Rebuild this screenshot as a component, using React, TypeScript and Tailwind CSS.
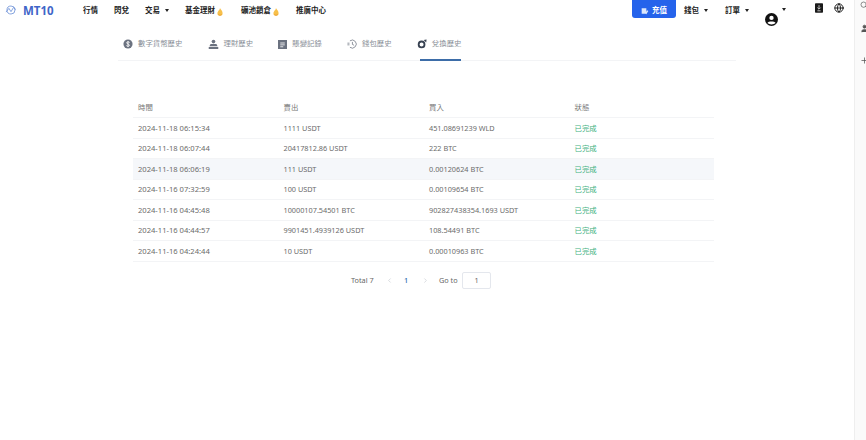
import { ChevronLeft, ChevronRight, Globe, Plus, Search, User } from 'lucide-react';

const font = "font-['Noto_Sans','Noto_Sans_CJK_TC',sans-serif]";

const rows = [
  ['2024-11-18 06:15:34', '1111 USDT', '451.08691239 WLD'],
  ['2024-11-18 06:07:44', '20417812.86 USDT', '222 BTC'],
  ['2024-11-18 06:06:19', '111 USDT', '0.00120624 BTC'],
  ['2024-11-16 07:32:59', '100 USDT', '0.00109654 BTC'],
  ['2024-11-16 04:45:48', '10000107.54501 BTC', '902827438354.1693 USDT'],
  ['2024-11-16 04:44:57', '9901451.4939126 USDT', '108.54491 BTC'],
  ['2024-11-16 04:24:44', '10 USDT', '0.00010963 BTC'],
];

const Caret = () => (
  <span className="ml-[5px] block h-0 w-0 border-x-[2.5px] border-t-[3px] border-x-transparent border-t-[#222]" />
);

const Flame = () => (
  <svg viewBox="0 0 10 12" className="ml-px mt-[2px] h-[8px] w-[8px]">
    <path d="M5 0c.4 2 3.8 3.6 3.8 7.200A3.800 3.800 0 0 1 5 11.600a3.800 3.800 0 0 1-3.800-4.400C1.400 5.600 2.400 5 2.800 3.600 3.600 4 4.400 2.400 5 0z" fill="#f7c04a" />
    <path d="M2.500 9c1.500 1.500 3.500 1.500 5 0v1.500l-2.500 1-2.500-1z" fill="#eb9f35" />
  </svg>
);

const NavItem = ({ label, caret, flame, className }: { label: string; caret?: boolean; flame?: boolean; className: string }) => (
  <div className={`flex h-[18px] items-center pt-[3px] text-[7.5px] font-bold text-[#222] ${className}`}>
    {label}
    {caret && <Caret />}
    {flame && <Flame />}
  </div>
);

const tabIcons = [
  <svg key="coin" viewBox="0 0 12 12" className="h-[10px] w-[10px]">
    <circle cx="6" cy="6" r="5.500" fill="#6b7280" />
    <path d="M8 4.200C7.500 3.300 4.500 3 4.300 4.500S8 6 7.800 7.600 4.500 8.800 4 7.800M6 2.500v7" stroke="#fff" strokeWidth="1" fill="none" />
  </svg>,
  <svg key="bag" viewBox="0 0 12 12" className="h-[11px] w-[11px]">
    <circle cx="6" cy="2.800" r="2" fill="#6b7280" />
    <path d="M2.800 5.400h6.400L10.500 8h-9zM.8 8.800h10.400V11H.8z" fill="#6b7280" />
  </svg>,
  <svg key="note" viewBox="0 0 12 12" className="h-[9px] w-[9px]">
    <path d="M0 0h12v12H0z" fill="#6b7280" />
    <path d="M3 4h6M3 6.500h6M3 9h4" stroke="#fff" strokeWidth="1.100" />
  </svg>,
  <svg key="wallet" viewBox="0 0 12 12" className="h-[10px] w-[10px]" fill="none" stroke="#6b7280" strokeWidth="0.9">
    <path d="M3.500 2.200A4.800 4.800 0 1 1 3.500 10" />
    <path d="M6.500 3.500v3l2 1M.5 5h2.500M.5 7h2.500" />
  </svg>,
  <svg key="swap" viewBox="0 0 12 12" className="h-[10px] w-[10px]">
    <circle cx="5.500" cy="6.500" r="3.500" fill="none" stroke="#374151" strokeWidth="2.200" />
    <path d="M8 1.200l3.500-.5-.5 3.500z" fill="#374151" />
  </svg>,
];

const tabs = ['數字貨幣歷史', '理財歷史', '賬變記錄', '錢包歷史', '兌換歷史'];

export default function App() {
  return (
    <div className={`flex h-[440px] w-[866px] overflow-hidden bg-white ${font}`}>
      <div className="w-[854px] shrink-0">
        <header className="flex h-[18px] items-start">
          <div className="flex h-[18px] w-[83px] items-center">
            <svg viewBox="0 0 14 12" className="ml-[5px] mt-[2px] h-[10px] w-[12px]" fill="none" stroke="#6f93d8" strokeWidth="1">
              <circle cx="7" cy="6" r="4.800" />
              <path d="M1 8.500 4.500 4 7 8l3-5 3 2.500" />
            </svg>
            <span className="ml-[6px] pt-[3px] text-[11.5px] font-bold leading-none text-[#3f66c8]">MT10</span>
          </div>
          <div className="flex h-[18px] flex-1 items-center">
            <NavItem label="行情" className="w-[31px]" />
            <NavItem label="閃兌" className="w-[31px]" />
            <NavItem label="交易" caret className="w-[40px]" />
            <NavItem label="基金理財" flame className="w-[56px]" />
            <NavItem label="礦池鎖倉" flame className="w-[55px]" />
            <NavItem label="推廣中心" className="w-[336px]" />
            <button className="flex h-[18px] w-[44px] items-center justify-center gap-[3px] rounded-b-[3px] bg-[#2563eb] pt-[3px] text-[7.5px] font-bold text-white">
              <svg viewBox="0 0 12 12" className="h-[8px] w-[8px]">
                <path d="M1 2h7v8H1zM9 5l2 1-3 5-1-1z" fill="#dbe6fb" />
              </svg>
              充值
            </button>
            <NavItem label="錢包" caret className="ml-[8px] w-[41px]" />
            <NavItem label="訂單" caret className="w-[39px]" />
            <div className="relative flex h-[18px] w-[51px] items-start">
              <svg viewBox="0 0 24 24" className="ml-[0.5px] mt-[13px] h-[13px] w-[13px]">
                <circle cx="12" cy="12" r="12" fill="#111" />
                <circle cx="12" cy="9" r="4" fill="#fff" />
                <path d="M4.500 18.500c2-3.500 13-3.500 15 0-3.500 3.500-11.500 3.500-15 0z" fill="#fff" />
              </svg>
              <span className="absolute left-[13px] top-[7.500px]">
                <Caret />
              </span>
            </div>
            <svg viewBox="0 0 10 12" className="mt-[-2px] h-[10px] w-[8px]">
              <rect width="10" height="12" rx="1" fill="#1a1a1a" />
              <path d="M5 2.500v4.500M3 5.500 5 7.500l2-2M3 9.500h4" stroke="#fff" strokeWidth="0.9" fill="none" />
            </svg>
            <Globe className="ml-[11px] mt-[-2px] h-[10px] w-[10px] text-[#222]" strokeWidth={2.4} />
          </div>
        </header>

        <nav className="ml-[118px] mt-[12px] flex h-[31px] w-[618px] border-b border-[#f3f4f6] pl-[5px]">
          {tabs.map((tab, i) => (
            <div
              key={tab}
              className={`relative mr-[25.200px] flex h-[30px] items-center gap-[5px] pb-[2px] text-[7.4px] text-[#8a8f98] ${i === 4 ? "after:absolute after:bottom-[-1px] after:left-[3px] after:right-0 after:h-[2px] after:bg-[#3d6da8] after:content-['']" : ''}`}
            >
              {tabIcons[i]}
              {tab}
            </div>
          ))}
        </nav>

        <main className="ml-[133px] mt-[36px] w-[581px] text-[7.3px] text-[#6b6b6b]">
          <div className="grid h-[21px] grid-cols-[145.500px_145.500px_145.500px_1fr] items-center border-b border-[#f3f4f6] pl-[5px] pt-px text-[7.4px] text-[#777]">
            <span>時間</span>
            <span>賣出</span>
            <span>買入</span>
            <span>狀態</span>
          </div>
          {rows.map((row, i) => (
            <div
              key={row[0]}
              className={`grid h-[20.500px] grid-cols-[145.500px_145.500px_145.500px_1fr] items-center border-b border-[#f3f4f6] pl-[5px] pt-px ${i === 2 ? 'bg-[#f5f7fa]' : ''}`}
            >
              <span className="text-[7.6px]">{row[0]}</span>
              <span>{row[1]}</span>
              <span>{row[2]}</span>
              <span className="text-[7.4px] text-[#3fb27f]">已完成</span>
            </div>
          ))}
        </main>

        <div className="ml-[351px] mt-[10px] flex h-[17px] items-center text-[7.3px] text-[#666]">
          <span className="w-[35px]">Total 7</span>
          <ChevronLeft className="h-[7px] w-[7px] text-[#c0c4cc]" />
          <span className="ml-[11px] w-[18px] font-medium text-[#2f6fb0]">1</span>
          <ChevronRight className="h-[7px] w-[7px] text-[#c0c4cc]" />
          <span className="ml-[10px] w-[23px]">Go to</span>
          <div className="flex h-[17px] w-[29px] items-center justify-center rounded-[2px] border border-[#e4e7ed]">1</div>
        </div>
      </div>

      <aside className="flex w-[12px] flex-col items-start gap-[14px] border-l border-[#eee] bg-[#fafafa] pl-[5px] pt-[1px] text-[#555]">
        <Search className="h-[8px] w-[8px] shrink-0" />
        <User className="mt-[0.500px] h-[9px] w-[9px] shrink-0 fill-[#555]" />
        <Plus className="mt-[9px] h-[9px] w-[9px] shrink-0" />
      </aside>
    </div>
  );
}
